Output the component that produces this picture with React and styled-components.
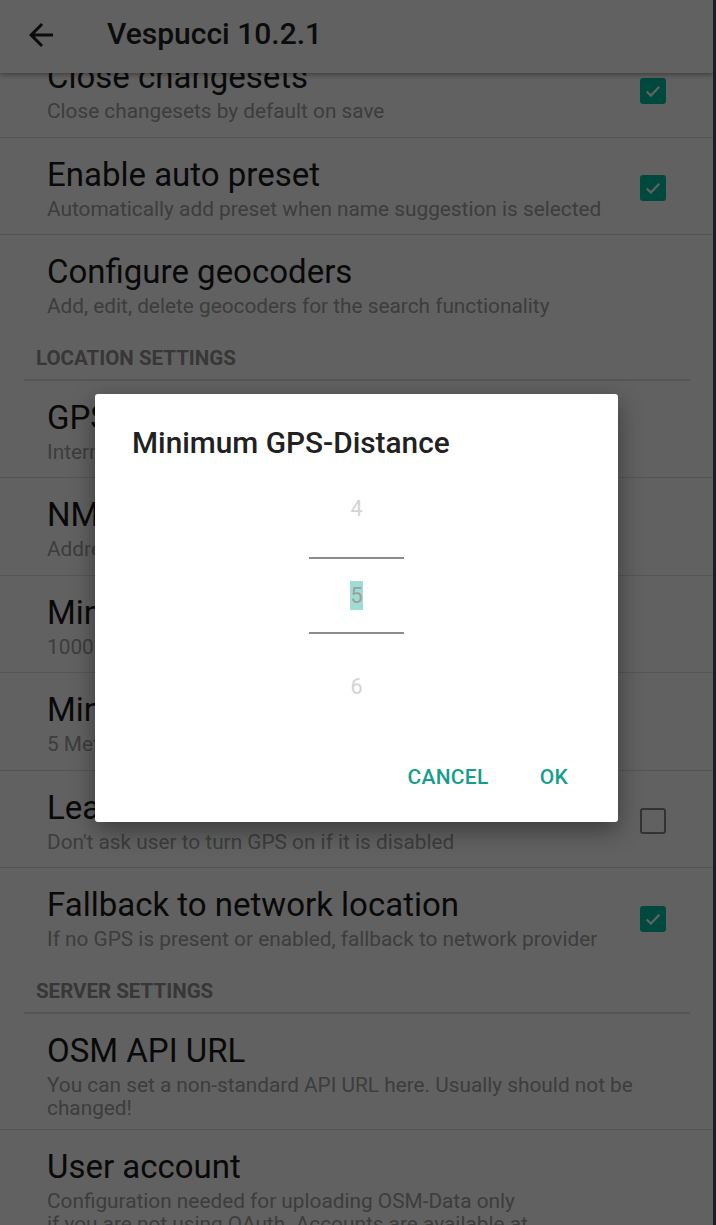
import React from "react";
import styled, { createGlobalStyle } from "styled-components";

const Global = createGlobalStyle`
  html, body { margin: 0; padding: 0; overflow: hidden; background: #1c1b2c; }
  * { box-sizing: border-box; }
`;

const Frame = styled.div`
  width: 716px;
  height: 1225px;
  display: flex;
  border-right: 3px solid #1c1b2c;
  font-family: Roboto, "Noto Sans", "Liberation Sans", sans-serif;
`;

const Screen = styled.div`
  position: relative;
  flex: 1;
  height: 1225px;
  overflow: hidden;
  background: #ffffff;
`;

const AppBar = styled.header`
  position: relative;
  z-index: 2;
  height: 73px;
  display: flex;
  align-items: center;
  gap: 48px;
  padding-left: 23px;
  background: #ffffff;
  box-shadow: 0 2px 5px rgba(0, 0, 0, 0.35);
`;

const BackIcon = styled.svg`
  width: 36px;
  height: 36px;
  flex: none;
  margin-bottom: 3px;
  fill: #212121;
`;

const AppTitle = styled.h1`
  margin: 0 0 6px 0;
  font-size: 30px;
  font-weight: 500;
  color: #212121;
  line-height: 34px;
`;

const List = styled.div`
  margin-top: -33px;
  position: relative;
  z-index: 1;
`;

const Row = styled.div`
  display: flex;
  align-items: flex-start;
  min-height: 97.5px;
  padding: 19px 47px 8px 47px;
  border-bottom: ${(p) => (p.$last ? "none" : "1px solid #e0e0e0")};
`;

const TextCol = styled.div`
  flex: 1;
  min-width: 0;
  display: flex;
  flex-direction: column;
  gap: 5px;
`;

const Title = styled.div`
  font-size: 33px;
  line-height: 36px;
  color: #1a1a1a;
  white-space: nowrap;
`;

const Summary = styled.div`
  font-size: 20.8px;
  line-height: 23.5px;
  color: #a0a0a0;
  white-space: pre-line;
`;

const Box = styled.div`
  align-self: center;
  margin: 0 0 6px 20px;
  width: 26px;
  height: 26px;
  flex: none;
  border-radius: 3px;
  display: flex;
  align-items: center;
  justify-content: center;
  background: ${(p) => (p.$checked ? "#00bfa5" : "transparent")};
  border: ${(p) => (p.$checked ? "none" : "2.5px solid #868686")};
`;

const CheckSvg = styled.svg`
  width: 20px;
  height: 20px;
  fill: none;
  stroke: #ffffff;
  stroke-width: 2.6;
`;

const Category = styled.div`
  height: 48px;
  margin: 0 23px 0 24px;
  padding: 13px 0 0 12px;
  border-bottom: 2px solid #e0e0e0;
  font-size: 20.5px;
  line-height: 24px;
  font-weight: 700;
  color: #909090;
`;

const Scrim = styled.div`
  position: absolute;
  inset: 0;
  z-index: 5;
  background: rgba(0, 0, 0, 0.62);
`;

const Dialog = styled.div`
  position: absolute;
  z-index: 6;
  left: 95px;
  top: 394px;
  width: 523px;
  height: 428px;
  background: #ffffff;
  border-radius: 3px;
  box-shadow: 0 8px 24px rgba(0, 0, 0, 0.4);
  display: flex;
  flex-direction: column;
`;

const DialogTitle = styled.div`
  padding: 32px 0 0 37px;
  font-size: 29.8px;
  line-height: 33px;
  font-weight: 500;
  color: #212121;
`;

const Picker = styled.div`
  align-self: center;
  width: 95px;
  display: flex;
  flex-direction: column;
`;

const PickerCell = styled.div`
  height: ${(p) => p.$h}px;
  display: flex;
  align-items: center;
  justify-content: center;
  font-size: 21.5px;
  color: ${(p) => (p.$current ? "#9e9e9e" : "#d4d4d4")};
  border-top: ${(p) => (p.$current ? "2px solid #8c8c8c" : "none")};
  border-bottom: ${(p) => (p.$current ? "2px solid #8c8c8c" : "none")};
`;

const Selected = styled.span`
  display: inline-block;
  padding: 0 0.5px;
  line-height: 29px;
  background: #9fdcd3;
`;

const Buttons = styled.div`
  flex: 1;
  display: flex;
  justify-content: flex-end;
  align-items: flex-start;
  gap: 51px;
  padding: 24px 50px 0 0;
`;

const TextButton = styled.span`
  font-size: 21px;
  line-height: 28px;
  font-weight: 500;
  color: #159f8b;
  letter-spacing: 0.3px;
`;

const Check = ({ checked }) => (
  <Box $checked={checked}>
    {checked && (
      <CheckSvg viewBox="0 0 24 24">
        <path d="M4.5 12.5l5 5L19.5 7" />
      </CheckSvg>
    )}
  </Box>
);

const Pref = ({ title, summary, check, last }) => (
  <Row $last={last}>
    <TextCol>
      <Title>{title}</Title>
      <Summary>{summary}</Summary>
    </TextCol>
    {check !== undefined && <Check checked={check} />}
  </Row>
);

export default function App() {
  return (
    <Frame>
      <Global />
      <Screen>
        <AppBar>
          <BackIcon viewBox="0 0 24 24">
            <path d="M20 11H7.83l5.59-5.59L12 4l-8 8 8 8 1.41-1.41L7.83 13H20v-2z" />
          </BackIcon>
          <AppTitle>Vespucci 10.2.1</AppTitle>
        </AppBar>
        <List>
          <Pref title="Close changesets" summary="Close changesets by default on save" check={true} />
          <Pref
            title="Enable auto preset"
            summary="Automatically add preset when name suggestion is selected"
            check={true}
          />
          <Pref
            title="Configure geocoders"
            summary="Add, edit, delete geocoders for the search functionality"
            last
          />
          <Category>LOCATION SETTINGS</Category>
          <Pref title="GPS source" summary="Internal GPS, network location" />
          <Pref title="NMEA network source" summary="Address and port of the network source" />
          <Pref title="Minimum GPS-Interval" summary="1000 Milliseconds" />
          <Pref title="Minimum GPS-Distance" summary="5 Meters" />
          <Pref
            title="Leave GPS off"
            summary="Don't ask user to turn GPS on if it is disabled"
            check={false}
          />
          <Pref
            title="Fallback to network location"
            summary="If no GPS is present or enabled, fallback to network provider"
            check={true}
            last
          />
          <Category>SERVER SETTINGS</Category>
          <Pref
            title="OSM API URL"
            summary="You can set a non-standard API URL here. Usually should not be changed!"
          />
          <Pref
            title="User account"
            summary={"Configuration needed for uploading OSM-Data only\nif you are not using OAuth. Accounts are available at\nhttps://www.openstreetmap.org/"}
          />
        </List>
        <Scrim />
        <Dialog>
          <DialogTitle>Minimum GPS-Distance</DialogTitle>
          <Picker>
            <PickerCell $h={98}>4</PickerCell>
            <PickerCell $h={77} $current>
              <Selected>5</Selected>
            </PickerCell>
            <PickerCell $h={105}>6</PickerCell>
          </Picker>
          <Buttons>
            <TextButton>CANCEL</TextButton>
            <TextButton>OK</TextButton>
          </Buttons>
        </Dialog>
      </Screen>
    </Frame>
  );
}
